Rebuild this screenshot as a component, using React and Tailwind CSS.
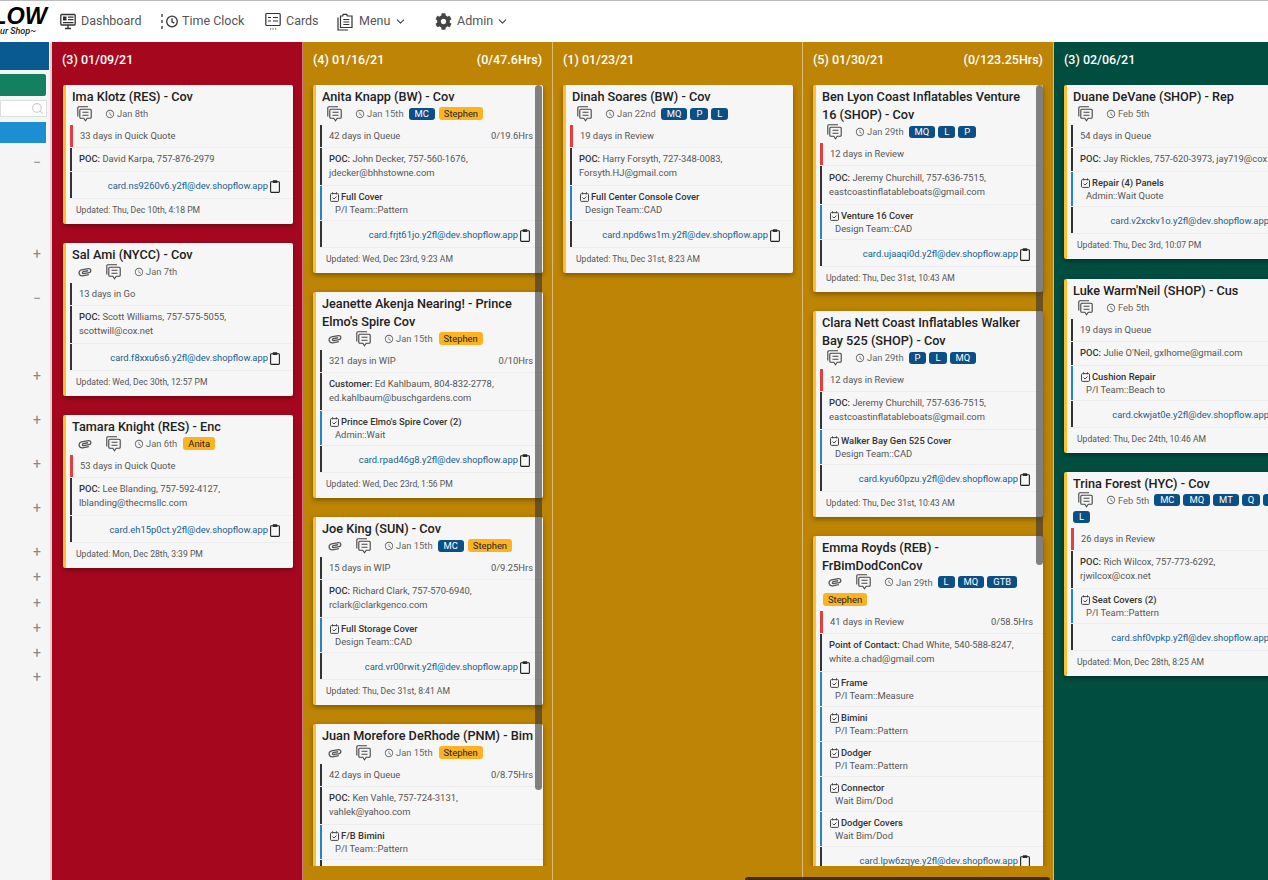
import { ChevronDown, Search } from "lucide-react";
import { MdAttachment, MdAccessTime } from "react-icons/md";
import { FaCog } from "react-icons/fa";

const CommentIcon = () => (
  <svg width="15" height="16" viewBox="0 0 15 16" fill="none" stroke="#444" strokeWidth="1.1">
    <path d="M.8 10.500V1.800a1 1 0 0 1 1-1H11" />
    <path d="M3.800 3.300h9.400a1 1 0 0 1 1 1v7a1 1 0 0 1-1 1h-3l-1.700 2.400-1.700-2.400H3.800a1 1 0 0 1-1-1v-7a1 1 0 0 1 1-1z" />
    <path d="M5.500 6.200h6M5.500 9.200h6" />
  </svg>
);

const ClipIcon = () => (
  <svg width="10" height="13" viewBox="0 0 10 13" fill="none" stroke="#222" strokeWidth="1.1">
    <rect x=".6" y="1.800" width="8.800" height="10.600" rx=".8" />
    <rect x="2.800" y=".3" width="4.400" height="2.600" fill="#222" stroke="none" />
  </svg>
);

const TaskIcon = () => (
  <svg width="9" height="10" viewBox="0 0 9 10" fill="none" stroke="#444" strokeWidth="1">
    <rect x=".5" y="1.600" width="8" height="7.800" rx="1" />
    <path d="M2.500 .3v2M6.500 .3v2" />
    <path d="M2.500 5.600l1.500 1.400 2.500-2.400" />
  </svg>
);

const DashIcon = () => (
  <svg width="16" height="17" viewBox="0 0 16 17" fill="none" stroke="#333" strokeWidth="1.300">
    <rect x=".8" y="1.500" width="14.400" height="10.500" rx="1" />
    <path d="M5 15.500h6M8 12v3.500" />
    <rect x="3" y="3.500" width="3.500" height="4" fill="#333" stroke="none" />
    <path d="M8 4.200h5.500M8 6.700h5.500M3 9.700h10.500" />
  </svg>
);

const TimeIcon = () => (
  <svg width="17" height="17" viewBox="0 0 17 17" fill="none" stroke="#333" strokeWidth="1.300">
    <path d="M1 1v3M1 7v3M1 13v3" />
    <circle cx="11" cy="8.500" r="5.300" />
    <path d="M11 5.300v3.500l2.300 1.300" />
  </svg>
);

const CardsIcon = () => (
  <svg width="16" height="19" viewBox="0 0 16 19" fill="none" stroke="#333" strokeWidth="1.200">
    <rect x=".8" y="1.500" width="14.400" height="12" rx="1" />
    <path d="M3 5.500h3M8 5.500h5M3 9h3M8 9h5" />
    <path d="M5 17h1.200M7.500 17h1.200M10 17h1.200" />
  </svg>
);

const MenuIcon = () => (
  <svg width="16" height="18" viewBox="0 0 16 18" fill="none" stroke="#333" strokeWidth="1.200">
    <path d="M1 4.500v12.500h10" />
    <path d="M3.500 3h2.200l.5-1.700h3.600L10.300 3h4.700v11.500H3.500z" />
    <path d="M6.300 6.500h6M6.300 9h6M6.300 11.500h6" />
  </svg>
);

const Tag = ({ t }) => (
  <span className="h-[12px] px-[6px] rounded-[3px] bg-[#0a4f86] text-white text-[9.4px] leading-[12px]">{t}</span>
);

const Person = ({ t }) => (
  <span className="h-[13px] px-[5px] ml-[1px] rounded-[3px] bg-[#fbb321] text-[#222] text-[9.4px] leading-[13px]">{t}</span>
);

const Row = ({ color = "bg-[#333]", wide, className = "", children }) => (
  <div className={`flex border-b border-[#ececec] ${className}`}>
    <div className={`shrink-0 ${color} ${wide ? "w-[3px]" : "w-[2px]"}`} />
    <div className="flex-1 min-w-0">{children}</div>
  </div>
);

function Card({ c }) {
  return (
    <div className={`w-[230px] shrink-0 bg-[#f6f6f6] border-l-[3px] border-[#fbc02d] rounded-[2px] shadow-[0_2px_5px_rgba(0,0,0,0.35)] ${c.cls || ""}`}>
      <div className="pl-[6px] pr-[6px] pt-[3px] -mb-[1px] text-[12.7px] font-medium leading-[18px] text-[#212121]">{c.title}</div>
      <div className={`pl-[6px] flex flex-wrap items-center gap-x-[3px] gap-y-[3px] min-h-[20px] text-[9.4px] text-[#666] leading-[13px] ${c.wrap ? "pb-[5px]" : "pb-[3px]"}`}>
        {c.clip && <MdAttachment className="text-[#555] text-[16px] ml-[5px] mr-[10px] -rotate-[10deg]" />}
        <span className={`mr-[10px] ${c.clip ? "" : "ml-[5px]"}`}><CommentIcon /></span>
        <span className="flex items-center gap-[2px] mr-[2px]"><MdAccessTime className="text-[10px]" />{c.date}</span>
        {(c.tags || []).map((t) => <Tag key={t} t={t} />)}
        {c.person && <Person t={c.person} />}
      </div>
      <div className="pl-[4px]">
        <Row color={c.late ? "bg-[#e53e3e]" : "bg-[#333]"} wide={c.late} className="h-[23px]">
          <div className="h-full flex items-center justify-between pl-[7px] pr-[10px] text-[9.4px] text-[#555]">
            <span>{c.status}</span>
            {c.hrs && <span>{c.hrs}</span>}
          </div>
        </Row>
        <Row>
          <div className={`pb-[5px] pl-[7px] pr-[6px] text-[9.4px] leading-[14px] text-[#555] ${c.tall ? "pt-[5px]" : "pt-[4px]"}`}>
            <b className="font-medium text-[#333]">{c.label || "POC"}:</b> {c.contact}
          </div>
        </Row>
        {(c.tasks || []).map((t) => (
          <Row key={t[0]} color="bg-[#1f86c7]">
            <div className="pt-[4px] pb-[4px] pl-[8px] text-[9.4px] leading-[13px]">
              <div className="flex items-center gap-[2px] font-medium text-[#333]"><TaskIcon />{t[0]}</div>
              <div className="pl-[5px] text-[#555]">{t[1]}</div>
            </div>
          </Row>
        ))}
        <Row className="h-[27px]">
          {c.mail && (
            <div className="h-full pt-[2px] flex items-center justify-end gap-[2px] pr-[13px] text-[9.4px] text-[#17608f]">
              <span>{c.mail}</span>
              <ClipIcon />
            </div>
          )}
        </Row>
      </div>
      {c.updated && <div className="h-[25px] pl-[10px] pb-[2px] flex items-center text-[8.6px] text-[#555]">Updated: {c.updated}</div>}
    </div>
  );
}

const columns = [
  {
    head: "(3) 01/09/21", bg: "bg-[#a5081e]", cls: "w-[251px]", list: "pl-[11px]",
    cards: [
      { title: "Ima Klotz (RES) - Cov", date: "Jan 8th", late: true, status: "33 days in Quick Quote", contact: "David Karpa, 757-876-2979", mail: "card.ns9260v6.y2fl@dev.shopflow.app", updated: "Thu, Dec 10th, 4:18 PM" },
      { title: "Sal Ami (NYCC) - Cov", clip: true, date: "Jan 7th", status: "13 days in Go", contact: "Scott Williams, 757-575-5055, scottwill@cox.net", mail: "card.f8xxu6s6.y2fl@dev.shopflow.app", updated: "Wed, Dec 30th, 12:57 PM" },
      { title: "Tamara Knight (RES) - Enc", clip: true, date: "Jan 6th", person: "Anita", late: true, status: "53 days in Quick Quote", contact: "Lee Blanding, 757-592-4127, lblanding@thecmsllc.com", mail: "card.eh15p0ct.y2fl@dev.shopflow.app", updated: "Mon, Dec 28th, 3:39 PM" },
    ],
  },
  {
    head: "(4) 01/16/21", hrs: "(0/47.6Hrs)", bg: "bg-[#bd8405]", cls: "w-[250px]", list: "pl-[10px]", thumb: "h-[705px]",
    cards: [
      { title: "Anita Knapp (BW) - Cov", date: "Jan 15th", tags: ["MC"], person: "Stephen", status: "42 days in Queue", hrs: "0/19.6Hrs", contact: "John Decker, 757-560-1676, jdecker@bhhstowne.com", tasks: [["Full Cover", "P/I Team::Pattern"]], mail: "card.frjt61jo.y2fl@dev.shopflow.app", updated: "Wed, Dec 23rd, 9:23 AM" },
      { title: "Jeanette Akenja Nearing! - Prince Elmo's Spire Cov", clip: true, date: "Jan 15th", person: "Stephen", status: "321 days in WIP", hrs: "0/10Hrs", label: "Customer", contact: "Ed Kahlbaum, 804-832-2778, ed.kahlbaum@buschgardens.com", tasks: [["Prince Elmo's Spire Cover (2)", "Admin::Wait"]], mail: "card.rpad46g8.y2fl@dev.shopflow.app", updated: "Wed, Dec 23rd, 1:56 PM" },
      { title: "Joe King (SUN) - Cov", clip: true, date: "Jan 15th", tags: ["MC"], person: "Stephen", status: "15 days in WIP", hrs: "0/9.25Hrs", contact: "Richard Clark, 757-570-6940, rclark@clarkgenco.com", tasks: [["Full Storage Cover", "Design Team::CAD"]], mail: "card.vr00rwit.y2fl@dev.shopflow.app", updated: "Thu, Dec 31st, 8:41 AM" },
      { title: "Juan Morefore DeRhode (PNM) - Bim", clip: true, date: "Jan 15th", person: "Stephen", status: "42 days in Queue", hrs: "0/8.75Hrs", contact: "Ken Vahle, 757-724-3131, vahlek@yahoo.com", tasks: [["F/B Bimini", "P/I Team::Pattern"]] },
    ],
  },
  {
    head: "(1) 01/23/21", bg: "bg-[#bd8405]", cls: "w-[250px]", list: "pl-[10px]",
    cards: [
      { title: "Dinah Soares (BW) - Cov", date: "Jan 22nd", tags: ["MQ", "P", "L"], late: true, status: "19 days in Review", contact: "Harry Forsyth, 727-348-0083, Forsyth.HJ@gmail.com", tasks: [["Full Center Console Cover", "Design Team::CAD"]], mail: "card.npd6ws1m.y2fl@dev.shopflow.app", updated: "Thu, Dec 31st, 8:23 AM" },
    ],
  },
  {
    head: "(5) 01/30/21", hrs: "(0/123.25Hrs)", bg: "bg-[#bd8405]", cls: "w-[251px]", list: "pl-[10px]", thumb: "h-[480px]",
    cards: [
      { title: "Ben Lyon Coast Inflatables Venture 16 (SHOP) - Cov", tall: true, date: "Jan 29th", tags: ["MQ", "L", "P"], late: true, status: "12 days in Review", contact: "Jeremy Churchill, 757-636-7515, eastcoastinflatableboats@gmail.com", tasks: [["Venture 16 Cover", "Design Team::CAD"]], mail: "card.ujaaqi0d.y2fl@dev.shopflow.app", updated: "Thu, Dec 31st, 10:43 AM" },
      { title: "Clara Nett Coast Inflatables Walker Bay 525 (SHOP) - Cov", date: "Jan 29th", tags: ["P", "L", "MQ"], late: true, status: "12 days in Review", contact: "Jeremy Churchill, 757-636-7515, eastcoastinflatableboats@gmail.com", tasks: [["Walker Bay Gen 525 Cover", "Design Team::CAD"]], mail: "card.kyu60pzu.y2fl@dev.shopflow.app", updated: "Thu, Dec 31st, 10:43 AM" },
      { title: "Emma Royds (REB) - FrBimDodConCov", wrap: true, clip: true, date: "Jan 29th", tags: ["L", "MQ", "GTB"], person: "Stephen", late: true, status: "41 days in Review", hrs: "0/58.5Hrs", label: "Point of Contact", contact: "Chad White, 540-588-8247, white.a.chad@gmail.com", tasks: [["Frame", "P/I Team::Measure"], ["Bimini", "P/I Team::Pattern"], ["Dodger", "P/I Team::Pattern"], ["Connector", "Wait Bim/Dod"], ["Dodger Covers", "Wait Bim/Dod"]], mail: "card.lpw6zqye.y2fl@dev.shopflow.app" },
    ],
  },
  {
    head: "(3) 02/06/21", bg: "bg-[#014d40]", cls: "w-[230px]", list: "pl-[10px]",
    cards: [
      { title: "Duane DeVane (SHOP) - Rep", date: "Feb 5th", status: "54 days in Queue", contact: "Jay Rickles, 757-620-3973, jay719@cox.net", tasks: [["Repair (4) Panels", "Admin::Wait Quote"]], mail: "card.v2xckv1o.y2fl@dev.shopflow.app", updated: "Thu, Dec 3rd, 10:07 PM" },
      { title: "Luke Warm'Neil (SHOP) - Cus", cls: "mt-[1px]", date: "Feb 5th", status: "19 days in Queue", contact: "Julie O'Neil, gxlhome@gmail.com", tasks: [["Cushion Repair", "P/I Team::Beach to"]], mail: "card.ckwjat0e.y2fl@dev.shopflow.app", updated: "Thu, Dec 24th, 10:46 AM" },
      { title: "Trina Forest (HYC) - Cov", wrap: true, date: "Feb 5th", tags: ["MC", "MQ", "MT", "Q", "F", "L"], late: true, status: "26 days in Review", contact: "Rich Wilcox, 757-773-6292, rjwilcox@cox.net", tasks: [["Seat Covers (2)", "P/I Team::Pattern"]], mail: "card.shf0vpkp.y2fl@dev.shopflow.app", updated: "Mon, Dec 28th, 8:25 AM" },
    ],
  },
];

const treeRows = [
  ["−", "h-[92px]"], ["+", "h-[44px]"], ["−", "h-[78px]"], ["+", "h-[44px]"], ["+", "h-[44px]"], ["+", "h-[44px]"],
  ["+", "h-[44px]"], ["+", "h-[25px]"], ["+", "h-[26px]"], ["+", "h-[25px]"], ["+", "h-[25px]"], ["+", "h-[24px]"], ["+", "h-[25px]"],
];

const navItems = [
  { icon: <DashIcon />, label: "Dashboard", cls: "w-[101px] gap-[5px]" },
  { icon: <TimeIcon />, label: "Time Clock", cls: "w-[104px] gap-[4px]" },
  { icon: <CardsIcon />, label: "Cards", cls: "w-[72px] gap-[5px]" },
  { icon: <MenuIcon />, label: "Menu", chev: true, cls: "w-[98px] gap-[6px]" },
  { icon: <FaCog className="text-[17px] text-[#444]" />, label: "Admin", chev: true, cls: "gap-[5px]" },
];

export default function App() {
  return (
    <div className="relative h-[880px] w-[1268px] overflow-hidden bg-white flex flex-col font-['Roboto',sans-serif]">
      <header className="h-[42px] shrink-0 border-t border-[#bbb] flex items-center">
        <div className="w-[60px] shrink-0 pr-[13px] -mt-[1px] overflow-hidden flex flex-col items-end">
          <div className="text-[23.5px] leading-[20px] font-bold italic font-['Liberation_Sans',sans-serif] text-black whitespace-nowrap">SHOPFLOW</div>
          <div className="pr-[11px] text-[9px] leading-[10px] italic font-medium text-[#222] whitespace-nowrap">~Your Shop~</div>
        </div>
        {navItems.map((n) => (
          <div key={n.label} className={`flex items-center shrink-0 text-[12.5px] text-[#555] ${n.cls}`}>
            {n.icon}
            <span>{n.label}</span>
            {n.chev && <ChevronDown size={13} strokeWidth={2} className="-ml-[2px] text-[#444]" />}
          </div>
        ))}
      </header>
      <div className="flex-1 min-h-0 flex">
        <aside className="w-[50px] shrink-0 bg-[#f5f5f5] overflow-hidden">
          <div className="h-[28px] mr-[1px] bg-[#0a5a92]" />
          <div className="mt-[4px] mr-[4px] h-[22px] bg-[#13805f] rounded-r-[2px]" />
          <div className="mt-[4px] mr-[3px] h-[17px] bg-white border border-[#ddd] flex items-center justify-end pr-[2px]">
            <Search size={13} className="text-[#ccc]" />
          </div>
          <div className="mt-[5px] mr-[4px] h-[21px] bg-[#1c8fd3]" />
          {treeRows.map((r, i) => (
            <div key={i} className={`flex justify-end pr-[9px] text-[14px] leading-[16px] text-[#888] ${r[1]} ${i === 0 ? "mt-[11px]" : ""}`}>{r[0]}</div>
          ))}
        </aside>
        <div className="w-[2px] shrink-0 bg-[#e6cfd2]" />
        {columns.map((col) => (
          <section key={col.head} className={`relative shrink-0 border-r border-[rgba(255,255,255,0.45)] flex flex-col ${col.cls} ${col.bg}`}>
            <div className="h-[36px] shrink-0 flex items-center justify-between pl-[10px] pr-[10px] text-white text-[12.5px] font-medium">
              <span>{col.head}</span>
              {col.hrs && <span>{col.hrs}</span>}
            </div>
            <div className={`flex-1 min-h-0 mb-[14px] mt-[7px] overflow-hidden flex flex-col gap-[19px] ${col.list}`}>
              {col.cards.map((c) => <Card key={c.title} c={c} />)}
            </div>
            {col.thumb && <div className={`absolute top-[43px] right-[10px] w-[7px] rounded-[4px] bg-[rgba(50,50,50,0.6)] ${col.thumb}`} />}
          </section>
        ))}
      </div>
      <div className="absolute left-[745px] bottom-0 w-[305px] h-[3px] rounded-t-[3px] bg-[rgba(0,0,0,0.65)]" />
    </div>
  );
}
